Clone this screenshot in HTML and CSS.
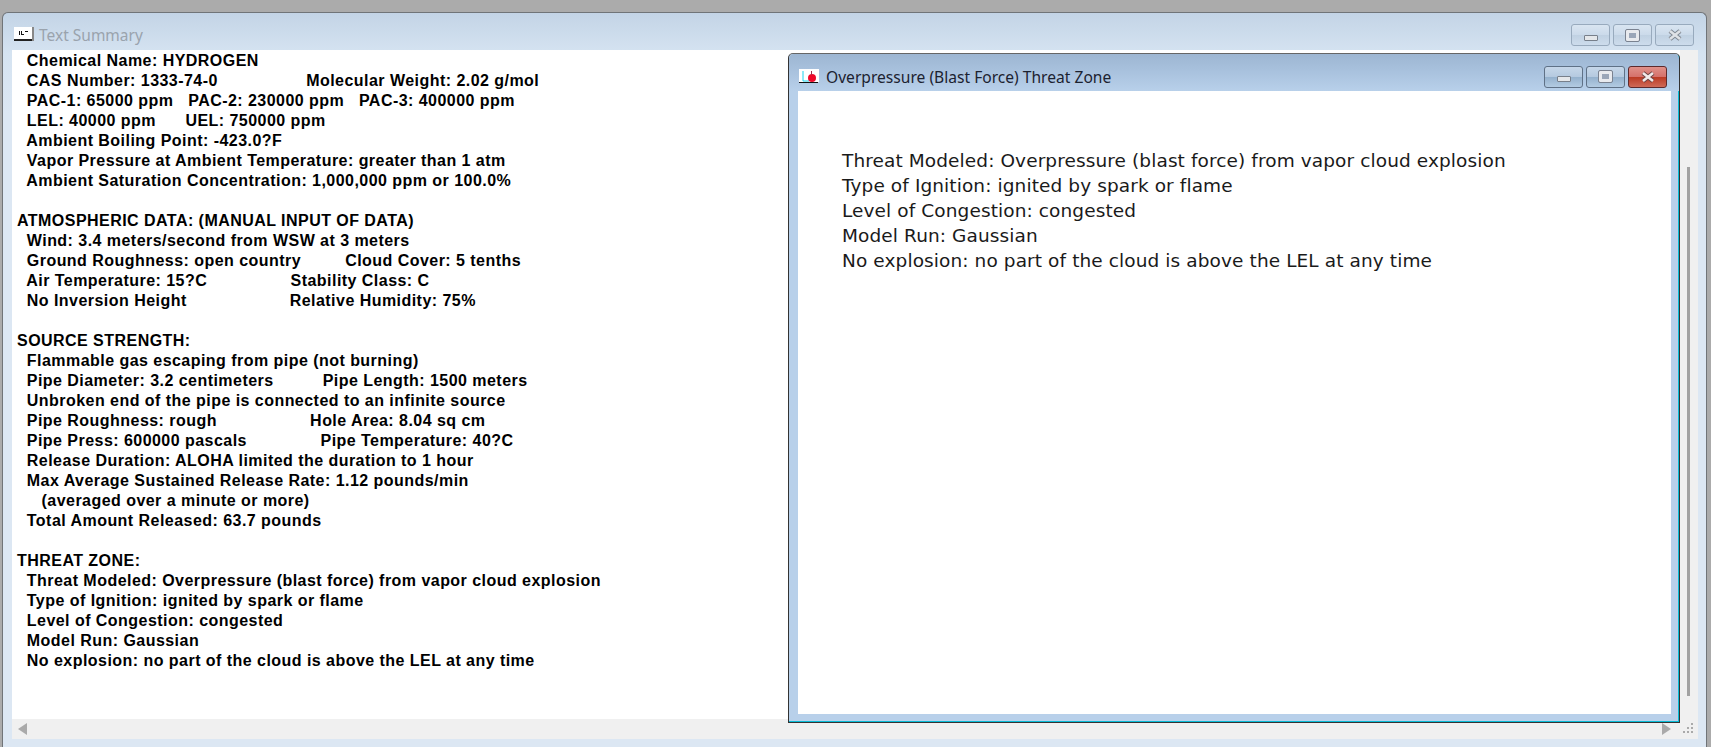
FILE: index.html
```html
<!DOCTYPE html>
<html lang="en">
<head>
  <meta charset="UTF-8" />
  <title>Text Summary</title>
  <link rel="stylesheet" href="styles.css">
</head>
<body>

<div class="window">
  <div class="titlebar">
    <svg class="app-icon" width="20" height="16" viewBox="0 0 20 16">
      <rect x="0" y="0" width="19" height="13" fill="#fff"/>
      <rect x="0" y="12" width="19" height="2" fill="#222"/>
      <rect x="18" y="0" width="2" height="14" fill="#888"/>
      <rect x="5" y="4" width="1" height="4" fill="#111"/>
      <rect x="7" y="4" width="1" height="4" fill="#111"/>
      <rect x="8" y="7" width="2" height="1" fill="#111"/>
      <rect x="11" y="4" width="3" height="1" fill="#111"/>
    </svg>
    <span class="title">Text Summary</span>
    <div class="controls">
      <div class="ctl"><span class="glyph-min"></span></div>
      <div class="ctl"><span class="glyph-max"></span></div>
      <div class="ctl">
        <svg class="glyph-x" width="16" height="12" viewBox="0 0 16 12">
          <path d="M3 2l10 8M13 2L3 10" stroke="#7f8791" stroke-width="4.5" fill="none"/>
          <path d="M3 2l10 8M13 2L3 10" stroke="#dfe2e6" stroke-width="2.6" fill="none"/>
        </svg>
      </div>
    </div>
  </div>

  <div class="client">
    <div class="main">
      <pre class="summary">  Chemical Name: HYDROGEN
  CAS Number: 1333-74-0                  Molecular Weight: 2.02 g/mol
  PAC-1: 65000 ppm   PAC-2: 230000 ppm   PAC-3: 400000 ppm
  LEL: 40000 ppm      UEL: 750000 ppm
  Ambient Boiling Point: -423.0?F
  Vapor Pressure at Ambient Temperature: greater than 1 atm
  Ambient Saturation Concentration: 1,000,000 ppm or 100.0%

ATMOSPHERIC DATA: (MANUAL INPUT OF DATA)
  Wind: 3.4 meters/second from WSW at 3 meters
  Ground Roughness: open country         Cloud Cover: 5 tenths
  Air Temperature: 15?C                 Stability Class: C
  No Inversion Height                     Relative Humidity: 75%

SOURCE STRENGTH:
  Flammable gas escaping from pipe (not burning)
  Pipe Diameter: 3.2 centimeters          Pipe Length: 1500 meters
  Unbroken end of the pipe is connected to an infinite source
  Pipe Roughness: rough                   Hole Area: 8.04 sq cm
  Pipe Press: 600000 pascals               Pipe Temperature: 40?C
  Release Duration: ALOHA limited the duration to 1 hour
  Max Average Sustained Release Rate: 1.12 pounds/min
     (averaged over a minute or more)
  Total Amount Released: 63.7 pounds

THREAT ZONE:
  Threat Modeled: Overpressure (blast force) from vapor cloud explosion
  Type of Ignition: ignited by spark or flame
  Level of Congestion: congested
  Model Run: Gaussian
  No explosion: no part of the cloud is above the LEL at any time</pre>

      <div class="child">
        <div class="titlebar child-bar">
          <svg class="app-icon" width="20" height="16" viewBox="0 0 20 16">
            <rect x="0" y="0" width="20" height="13" fill="#fff"/>
            <path d="M4 2v10h6" fill="none" stroke="#19d4ee" stroke-width="1"/>
            <circle cx="13" cy="9" r="4" fill="#ee0a2a"/>
            <rect x="12" y="2" width="1" height="4" fill="#a03050"/>
            <rect x="0" y="13" width="19" height="1" fill="#111"/>
          </svg>
          <span class="title child-title">Overpressure (Blast Force) Threat Zone</span>
          <div class="controls">
            <div class="ctl active"><span class="glyph-min"></span></div>
            <div class="ctl active"><span class="glyph-max"></span></div>
            <div class="ctl close">
              <svg class="glyph-x" width="16" height="12" viewBox="0 0 16 12">
                <path d="M3 2l10 8M13 2L3 10" stroke="#6e4444" stroke-width="4.5" fill="none"/>
                <path d="M3 2l10 8M13 2L3 10" stroke="#f2eaea" stroke-width="2.6" fill="none"/>
              </svg>
            </div>
          </div>
        </div>
        <div class="child-body">
          <p>Threat Modeled: Overpressure (blast force) from vapor cloud explosion</p>
          <p>Type of Ignition: ignited by spark or flame</p>
          <p>Level of Congestion: congested</p>
          <p>Model Run: Gaussian</p>
          <p>No explosion: no part of the cloud is above the LEL at any time</p>
        </div>
      </div>
    </div>

    <div class="vscroll"><div class="vthumb"></div></div>

    <div class="hscroll">
      <span class="arrow-left"></span>
      <span class="arrow-right"></span>
      <svg class="grip" width="12" height="12" viewBox="0 0 12 12" fill="#aaa">
        <rect x="8" y="0" width="2" height="2"/>
        <rect x="4" y="4" width="2" height="2"/>
        <rect x="8" y="4" width="2" height="2"/>
        <rect x="0" y="8" width="2" height="2"/>
        <rect x="4" y="8" width="2" height="2"/>
        <rect x="8" y="8" width="2" height="2"/>
      </svg>
    </div>
  </div>
</div>

</body>
</html>
```

FILE: styles.css
```css
* {
  box-sizing: border-box;
}
html, body {
  margin: 0;
  height: 100%;
  overflow: hidden;
}
body {
  background: #ababab;
  padding: 12px 4px 0 2px;
  font-family: "Liberation Sans", sans-serif;
}
.window {
  height: 748px;
  display: flex;
  flex-direction: column;
  border: 1px solid #707478;
  border-bottom: none;
  border-radius: 6px 6px 0 0;
  padding: 0 9px 0 9px;
  background: linear-gradient(180deg, #c3d4e6 0, #d5e3f1 40px, #dce7f3 100px);
}
.titlebar {
  height: 37px;
  flex: none;
  display: flex;
  align-items: center;
  padding: 7px 3px 0 2px;
}
.app-icon {
  flex: none;
}
.title {
  margin-left: 5px;
  font-family: "Noto Sans", sans-serif;
  font-size: 15.5px;
  color: #9aa3ad;
}
.controls {
  margin-left: auto;
  display: flex;
  gap: 3px;
}
.ctl {
  width: 39px;
  height: 22px;
  border: 1px solid #98aabd;
  border-radius: 3px;
  background: linear-gradient(180deg, #d9e5f1 0, #cbdaea 50%, #c0d1e2 51%, #cddcec 100%);
  display: flex;
  align-items: center;
  justify-content: center;
}
.glyph-min {
  width: 14px;
  height: 6px;
  margin-top: 5px;
  background: #e4e7ea;
  border: 1px solid #777f8a;
  border-radius: 1px;
}
.glyph-max {
  width: 13px;
  height: 11px;
  background: #9aa6b8;
  border: 3px solid #e8eaee;
  outline: 1px solid #7a8290;
  border-radius: 1px;
}

.client {
  flex: none;
  height: 689px;
  display: grid;
  grid-template-columns: 1fr 18px;
  grid-template-rows: 669px 20px;
  background: #f0f0f0;
  width: 1686px;
}
.main {
  position: relative;
  background: #fff;
  min-width: 0;
}
.summary {
  margin: 0;
  padding: 1px 0 0 5px;
  font-family: "Liberation Sans", sans-serif;
  font-weight: bold;
  font-size: 16px;
  line-height: 20px;
  letter-spacing: 0.46px;
  color: #000;
}

/* inner mdi window, sits over the summary text */
.child {
  position: absolute;
  left: 776px;
  top: 3px;
  width: 892px;
  height: 670px;
  display: flex;
  flex-direction: column;
  border: 1px solid #333;
  border-top-color: #666;
  border-radius: 5px 5px 0 0;
  background: #b8d0ea;
  padding: 0 8px 8px 9px;
  box-shadow: inset -1px -1px 0 #08bcd6;
}
.child-bar {
  height: 37px;
  margin: 0 -8px 0 -9px;
  padding: 8px 12px 0 10px;
  border-radius: 5px 5px 0 0;
  background: linear-gradient(180deg, #9db6d2 0, #a9c2de 18px, #b8d0ea 37px);
}
.child-title {
  margin-left: 7px;
  font-size: 15.6px;
  color: #1c2230;
}
.ctl.active {
  border-color: #5f7186;
  background: linear-gradient(180deg, #c6d7e9 0, #b4c9df 50%, #94b1cd 51%, #b3cbe2 100%);
}
.ctl.close {
  border-color: #5e2a2c;
  background: linear-gradient(180deg, #e0918a 0, #d5706a 50%, #bb3a24 51%, #cf6a58 100%);
}
.child-body {
  flex: 1;
  background: #fff;
  padding: 57px 0 0 44px;
  font-family: "DejaVu Sans", sans-serif;
  font-size: 18.5px;
  letter-spacing: 0.1px;
  color: #1a1a1a;
}
.child-body p {
  margin: 0;
  line-height: 25px;
}

.vscroll {
  background: #f0f0f0;
  padding: 117px 0 23px 7px;
}
.vthumb {
  width: 3px;
  height: 100%;
  background: #a2a2a2;
}
.hscroll {
  grid-column: 1 / 3;
  display: flex;
  align-items: center;
  padding: 0 3px 0 6px;
  background: #f0f0f0;
}
.arrow-left {
  border: 6px solid transparent;
  border-right: 9px solid #aaa;
  border-left: none;
}
.arrow-right {
  margin-left: auto;
  margin-right: 12px;
  border: 6px solid transparent;
  border-left: 9px solid #aaa;
  border-right: none;
}
.grip {
  flex: none;
}
```
